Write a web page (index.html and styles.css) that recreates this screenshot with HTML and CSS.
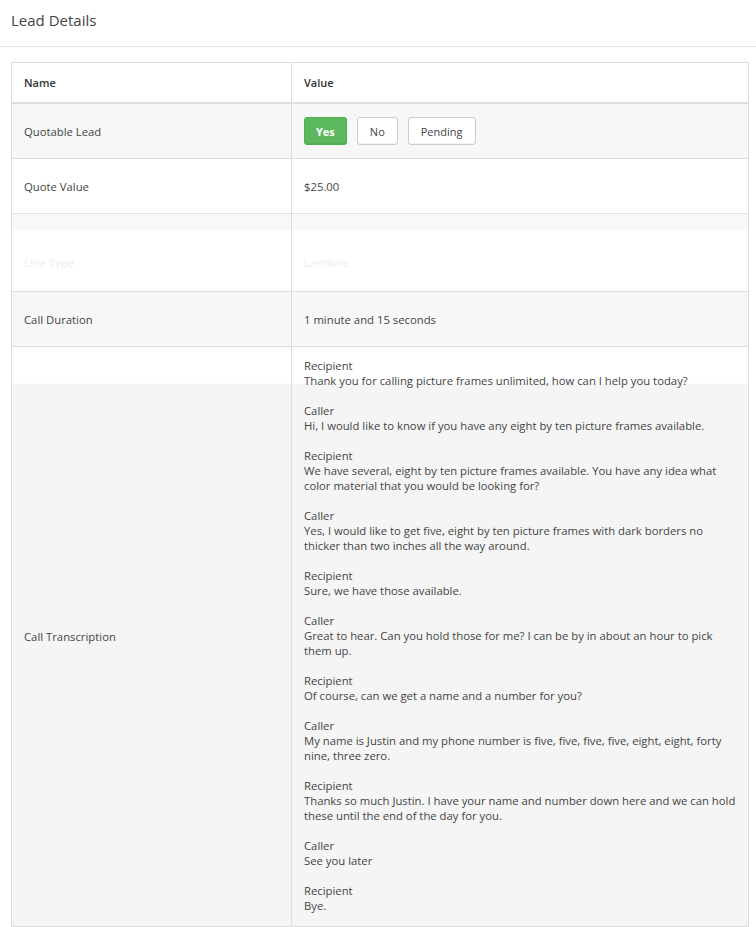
FILE: index.html
```html
<!DOCTYPE html>
<html>
<head>
<meta charset="utf-8">
<link rel="stylesheet" href="styles.css">
</head>
<body>
<div class="header"><h1 class="title">Lead Details</h1></div>
<div class="content">
  <table class="details">
    <thead>
      <tr><th class="c-name">Name</th><th>Value</th></tr>
    </thead>
    <tbody>
      <tr class="stripe row-btn">
        <td>Quotable Lead</td>
        <td>
          <div class="btns">
            <button class="btn btn-yes">Yes</button>
            <button class="btn">No</button>
            <button class="btn">Pending</button>
          </div>
        </td>
      </tr>
      <tr class="row-std"><td>Quote Value</td><td>$25.00</td></tr>
      <tr class="row-faded"><td>Line Type</td><td>Landline</td></tr>
      <tr class="stripe row-dur"><td>Call Duration</td><td>1 minute and 15 seconds</td></tr>
      <tr class="row-trans">
        <td>Call Transcription</td>
        <td class="trans">
          <p>Recipient<br>Thank you for calling picture frames unlimited, how can I help you today?</p>
          <p>Caller<br>Hi, I would like to know if you have any eight by ten picture frames available.</p>
          <p>Recipient<br>We have several, eight by ten picture frames available. You have any idea what color material that you would be looking for?</p>
          <p>Caller<br>Yes, I would like to get five, eight by ten picture frames with dark borders no thicker than two inches all the way around.</p>
          <p>Recipient<br>Sure, we have those available.</p>
          <p>Caller<br>Great to hear. Can you hold those for me? I can be by in about an hour to pick them up.</p>
          <p>Recipient<br>Of course, can we get a name and a number for you?</p>
          <p>Caller<br>My name is Justin and my phone number is five, five, five, five, eight, eight, forty nine, three zero.</p>
          <p>Recipient<br>Thanks so much Justin. I have your name and number down here and we can hold these until the end of the day for you.</p>
          <p>Caller<br>See you later</p>
          <p>Recipient<br>Bye.</p>
        </td>
      </tr>
    </tbody>
  </table>
</div>
</body>
</html>
```

FILE: styles.css
```css
html, body {
  margin: 0;
  padding: 0;
  background: #fff;
}
body {
  font-family: "Open Sans", "Noto Sans", sans-serif;
  font-size: 11.3px;
  color: #444;
}
.header {
  height: 47px;
  border-bottom: 1px solid #e6e6e6;
  box-sizing: border-box;
  padding: 10px 11px 0;
}
.title {
  margin: 0;
  font-size: 15px;
  font-weight: 400;
  color: #444;
  line-height: 20px;
}
.content {
  padding: 15px 7px 0 11px;
}
.details {
  width: 738px;
  border-collapse: collapse;
  border: 1px solid #dddddd;
}
.details th, .details td {
  border: 1px solid #dddddd;
  text-align: left;
  padding: 0 12px;
  vertical-align: middle;
  line-height: 15px;
}
.details th {
  height: 39px;
  font-weight: 600;
  font-size: 11px;
  color: #333;
  border-bottom: 2px solid #dddddd;
}
.c-name { width: 255px; }
.stripe td { background: #f7f7f7; }
.row-btn td { height: 54px; }
.row-std td { height: 54px; }
.row-dur td { height: 54px; }
.row-faded td {
  height: 78px;
  color: #eeeeee;
  padding-top: 20px;
  box-sizing: border-box;
  background: linear-gradient(#f8f8f8 0, #f8f8f8 16px, #fff 16px);
}
.row-trans td {
  background: linear-gradient(#fff 0, #fff 36px, #f5f5f5 36px);
}
.trans {
  padding-top: 11px !important;
  padding-bottom: 13px !important;
}
.trans p { margin: 0 0 15px; }
.trans p:last-child { margin-bottom: 0; }
.btns {
  display: flex;
  gap: 10px;
}
.btn {
  font-family: inherit;
  font-size: 11px;
  color: #444;
  background: #fff;
  border: 1px solid #cccccc;
  border-radius: 3px;
  height: 28px;
  padding: 0 12px;
  box-shadow: inset 0 -1px 0 rgba(0,0,0,0.05);
}
.btn-yes {
  background: #5cb85c;
  border-color: #4cae4c;
  color: #fff;
  font-weight: 700;
  padding: 0 11px;
}
```
